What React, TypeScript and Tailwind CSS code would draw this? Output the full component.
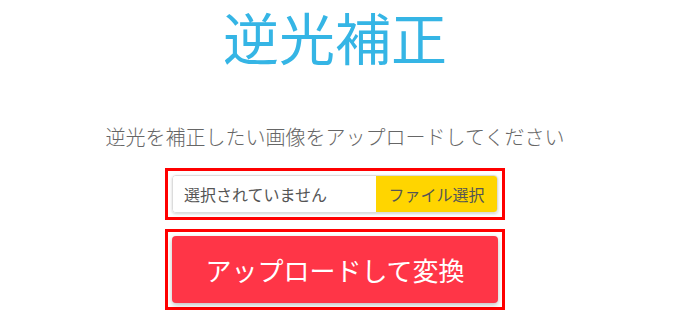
import React from "react";

export default function App() {
  return (
    <div
      className="w-[674px] h-[330px] bg-white flex flex-col items-center pr-[4px] pt-[8px]"
      style={{ fontFamily: '"Noto Sans CJK JP", "Noto Sans", sans-serif' }}
    >
      {/* Title */}
      <h1 className="text-[56px] leading-[56px] text-[#35b5e5]">逆光補正</h1>

      {/* Lead */}
      <p className="mt-[58px] text-[20px] leading-[30px] font-light text-[#666]">
        逆光を補正したい画像をアップロードしてください
      </p>

      {/* File picker */}
      <div className="mt-[16px] w-[340px] border-[3px] border-[#ff0000] p-[4px]">
        <label className="flex h-[38px] rounded-[4px] border border-[#dcdcdc] shadow-[0_1px_3px_rgba(0,0,0,0.18)] overflow-hidden cursor-pointer">
          <span className="flex-1 flex items-center pl-[11px] text-[16px] text-[#555] bg-white">
            選択されていません
          </span>
          <span className="w-[121px] flex items-center justify-center text-[16px] text-[#555] bg-[#ffd500]">
            ファイル選択
          </span>
        </label>
      </div>

      {/* Submit */}
      <div className="mt-[9px] w-[340px] border-[3px] border-[#ff0000] p-[4px]">
        <button className="w-full h-[67px] rounded-[4px] bg-[#ff3547] text-white text-[26px] shadow-[0_2px_5px_rgba(0,0,0,0.25)]">
          アップロードして変換
        </button>
      </div>
    </div>
  );
}
